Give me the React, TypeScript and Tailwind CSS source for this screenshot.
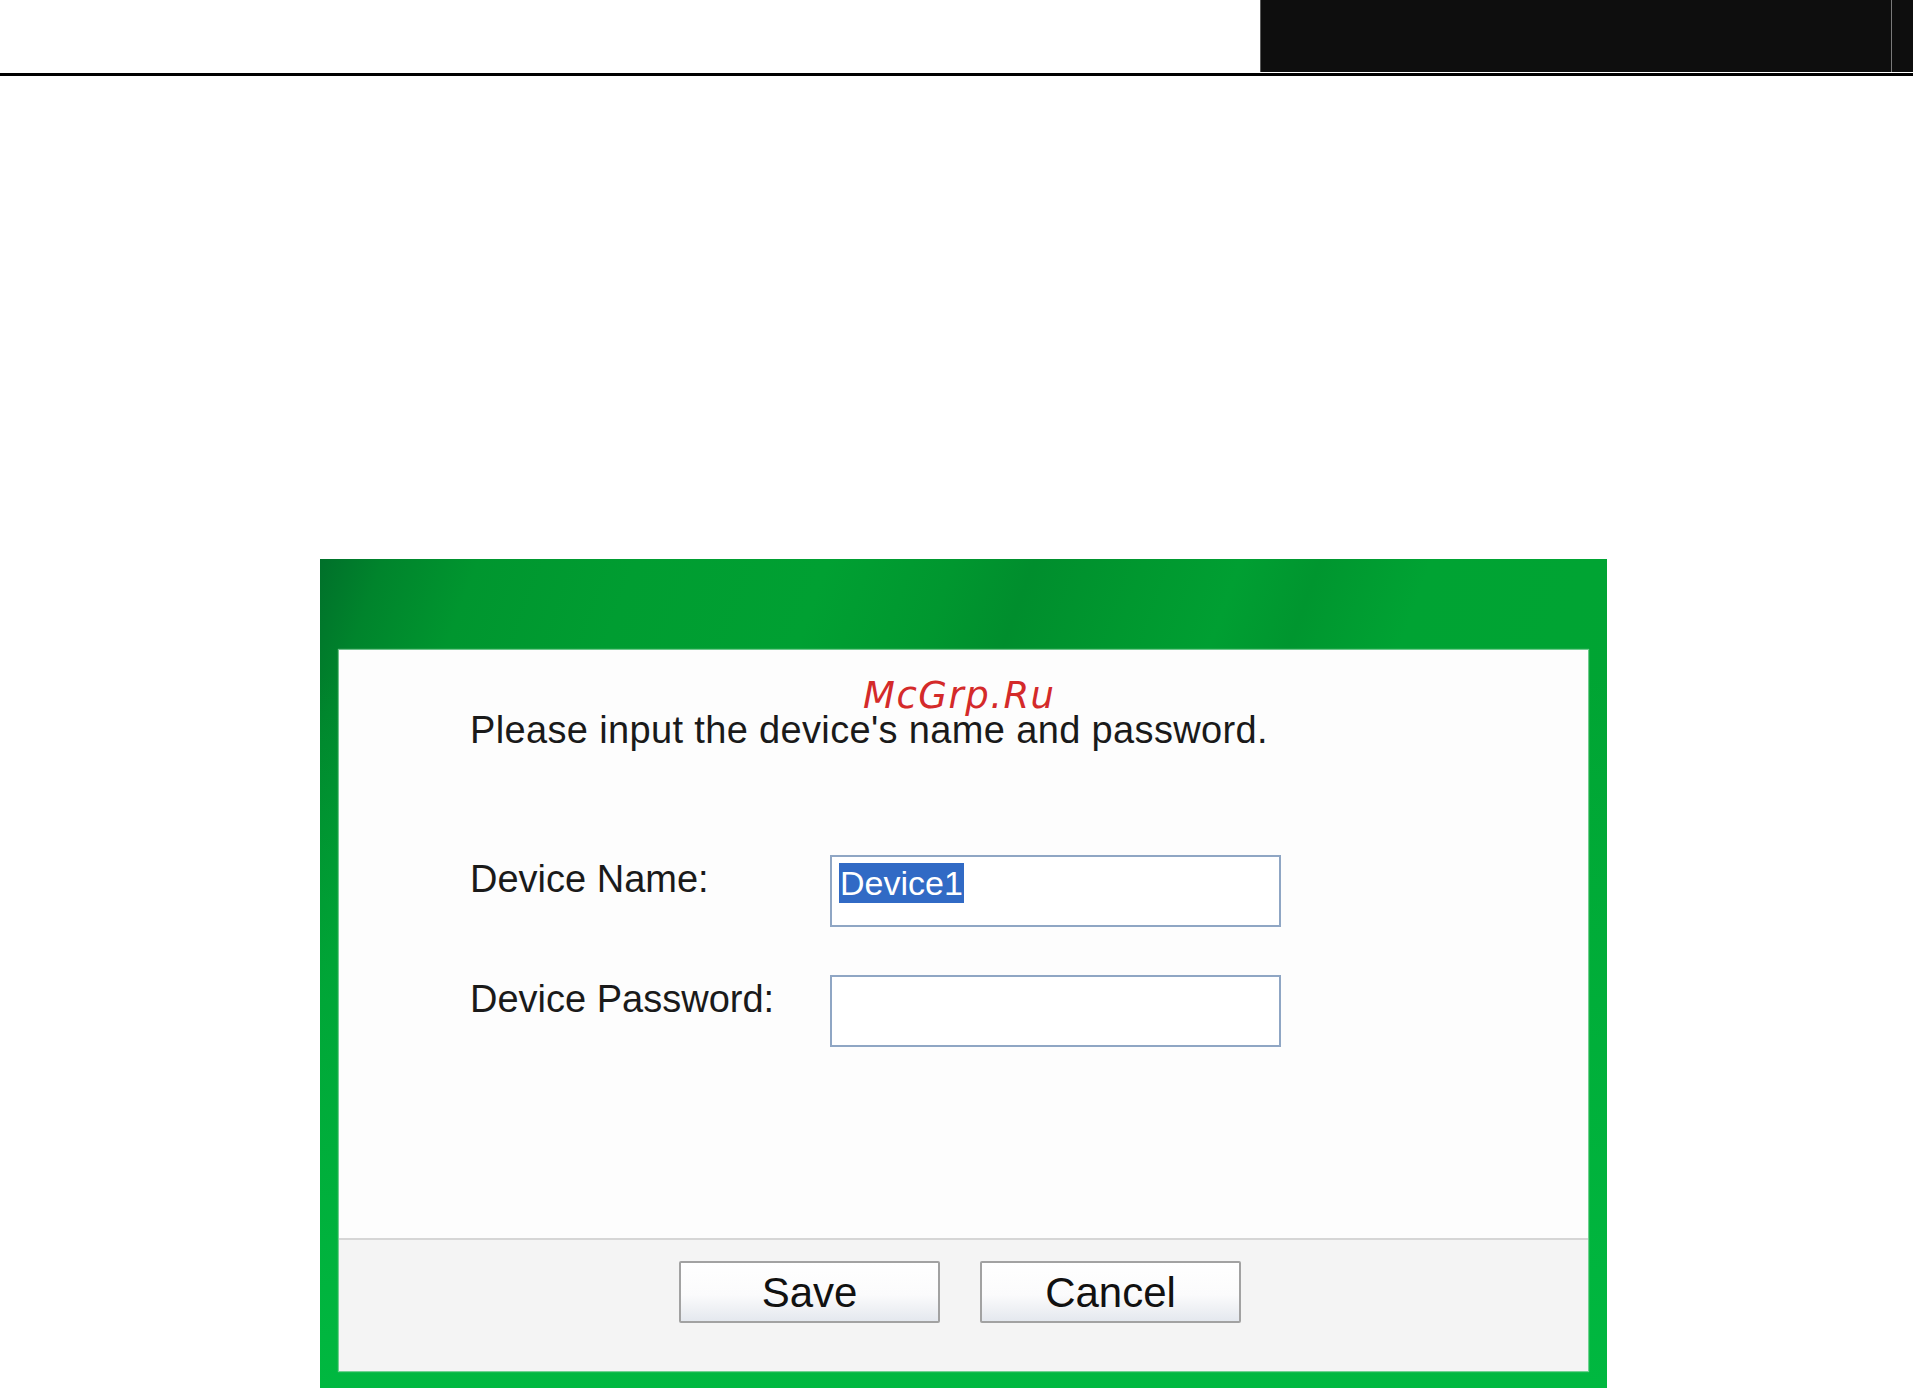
import React from "react";

export default function App() {
  return (
    <div className="relative w-[1913px] h-[1388px] overflow-hidden bg-white font-['Liberation_Sans',Arial,sans-serif]">
      {/* top strip */}
      <div className="flex h-[72px]">
        <div className="flex-1" />
        <div className="flex w-[653px] border-l border-[#5a5a5a] bg-[#0e0e0e]">
          <div className="w-[630px]" />
          <div className="w-px bg-[#7a7a7a]" />
          <div className="flex-1" />
        </div>
      </div>
      <div className="mt-px h-[3px] bg-black" />

      {/* dialog */}
      <div className="ml-[320px] mt-[483px] w-[1287px] h-[829px] flex flex-col px-[19px] pt-[91px] pb-[17px] bg-[linear-gradient(to_bottom,rgba(0,184,64,0)_14%,rgba(0,184,64,0.55)_60%,#00b840_100%),linear-gradient(110deg,#00702a_0%,#00842c_4%,#00962f_10%,#009d31_20%,#00a032_32%,#00972f_40%,#008e2d_45%,#00982f_52%,#009f32_58%,#00962f_63%,#00a333_70%,#00a633_100%)]">
        <div className="flex flex-col flex-1 bg-[#fdfdfd] shadow-[0_0_1px_1px_rgba(160,220,180,0.7)]">
          <div className="h-[588px] pl-[131px] pt-[58px]">
            <div className="text-[38px] leading-[44px] tracking-[0.35px] text-[#1a1a1a]">
              Please input the device's name and password.
            </div>
            <div className="mt-[103px] flex h-[72px] items-start">
              <div className="w-[360px] pt-[2px] text-[38px] leading-[44px] text-[#1a1a1a]">Device Name:</div>
              <div className="w-[451px] h-[72px] border-2 border-[#8fa6c4] bg-white pl-[7px] pt-[6px]">
                <span className="inline-block h-[40px] bg-[#316ac5] px-[1px] text-[34px] leading-[40px] text-white">Device1</span>
              </div>
            </div>
            <div className="mt-[48px] flex h-[72px] items-start">
              <div className="w-[360px] pt-[2px] text-[38px] leading-[44px] text-[#1a1a1a]">Device Password:</div>
              <div className="w-[451px] h-[72px] border-2 border-[#8fa6c4] bg-white" />
            </div>
          </div>
          <div className="h-[2px] bg-[#d6d6d6]" />
          <div className="flex flex-1 justify-center gap-[40px] bg-[#f4f4f4] pt-[21px] pr-[7px]">
            <div className="flex h-[62px] w-[261px] items-center justify-center rounded-[2px] border-2 border-[#a2a2a2] bg-[linear-gradient(to_bottom,#ffffff_0%,#fbfbfc_55%,#e4e8ee_100%)] text-[42px] text-[#111]">
              Save
            </div>
            <div className="flex h-[62px] w-[261px] items-center justify-center rounded-[2px] border-2 border-[#a2a2a2] bg-[linear-gradient(to_bottom,#ffffff_0%,#fbfbfc_55%,#e4e8ee_100%)] text-[42px] text-[#111]">
              Cancel
            </div>
          </div>
        </div>
      </div>

      {/* watermark */}
      <div className="absolute left-[863px] top-[677px] font-['DejaVu_Sans',sans-serif] italic text-[37px] leading-[37px] tracking-[1.5px] text-[#d42a2a]">
        McGrp.Ru
      </div>
    </div>
  );
}
